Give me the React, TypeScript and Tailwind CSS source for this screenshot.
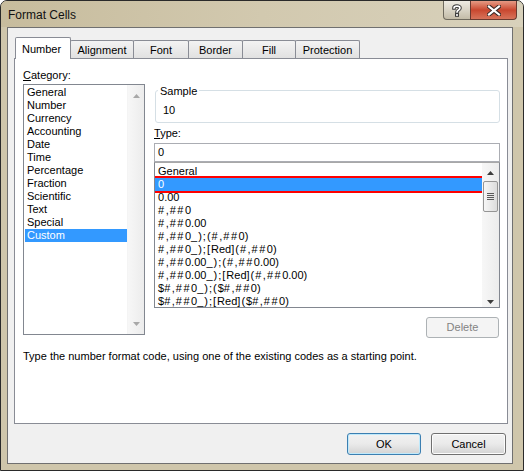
import React from "react";

const categories = [
  "General",
  "Number",
  "Currency",
  "Accounting",
  "Date",
  "Time",
  "Percentage",
  "Fraction",
  "Scientific",
  "Text",
  "Special",
  "Custom",
];

const types = [
  "General",
  "0",
  "0.00",
  "#,##0",
  "#,##0.00",
  "#,##0_);(#,##0)",
  "#,##0_);[Red](#,##0)",
  "#,##0.00_);(#,##0.00)",
  "#,##0.00_);[Red](#,##0.00)",
  "$#,##0_);($#,##0)",
  "$#,##0_);[Red]($#,##0)",
];

function Code({ text }: { text: string }) {
  if (text === "General") return <>{text}</>;
  return (
    <>
      {text.split("").map((ch, i) => {
        if (ch === "#") {
          return (
            <span key={i} className="tracking-[1.5px]">
              {ch}
            </span>
          );
        }
        if (",()[];_".includes(ch)) {
          return (
            <span key={i} className="tracking-[1px]">
              {ch}
            </span>
          );
        }
        return <span key={i}>{ch}</span>;
      })}
    </>
  );
}

function Arrow({ up, color }: { up: boolean; color: string }) {
  return (
    <svg width="7" height="4" viewBox="0 0 7 4">
      {up ? (
        <polygon points="0,4 3.5,0 7,4" fill={color} />
      ) : (
        <polygon points="0,0 3.5,4 7,0" fill={color} />
      )}
    </svg>
  );
}

function Tab({ label, w, active }: { label: string; w: string; active?: boolean }) {
  if (active) {
    return (
      <div
        className={`${w} h-[22px] -mb-px relative z-10 bg-white border border-b-0 border-[#898c95] rounded-t-[2px] flex justify-center pt-[5px] pr-[3px]`}
      >
        {label}
      </div>
    );
  }
  return (
    <div
      className={`${w} h-[18px] -ml-px border border-b-0 border-[#898c95] rounded-t-[2px] bg-gradient-to-b from-[#f3f3f3] to-[#e1e1e1] flex justify-center pt-[3px]`}
    >
      {label}
    </div>
  );
}

export default function App() {
  return (
    <div className="w-[524px] h-[471px] bg-[#cfc6ab] border border-[#2a2a2a] rounded-t-[7px] flex flex-col font-['Liberation_Sans',Arial,sans-serif] text-[11px] leading-[13px] text-black overflow-hidden select-none">
      {/* Title bar */}
      <div className="h-[26px] flex items-start bg-gradient-to-r from-[#c7bc9d] via-[#d2c9af] to-[#d8d1bb]">
        <div className="ml-[7px] mt-[7px] text-[12px] leading-[14px] text-[#111]">Format Cells</div>
        <div className="ml-auto mr-[6px] flex h-[19px]">
          <div className="w-[28px] h-[19px] border border-t-0 border-[#6e6a5e] rounded-bl-[4px] bg-gradient-to-b from-[#eeebe3] via-[#d9d4c6] to-[#c3bca8] flex items-center justify-center">
            <svg width="10" height="13" viewBox="0 0 10 13">
              <path d="M2 4 C2 1.5 8 1.5 8 4 C8 6 5 6 5 8" fill="none" stroke="#3a3a3a" strokeWidth="3.6" strokeLinecap="square" />
              <rect x="3" y="9.2" width="4" height="3.6" fill="#3a3a3a" />
              <path d="M2 4 C2 1.5 8 1.5 8 4 C8 6 5 6 5 8" fill="none" stroke="#ffffff" strokeWidth="1.6" strokeLinecap="square" />
              <rect x="4" y="10.2" width="2" height="1.6" fill="#ffffff" />
            </svg>
          </div>
          <div className="w-[47px] h-[19px] -ml-px border border-t-0 border-[#6b3a30] rounded-br-[4px] bg-gradient-to-b from-[#e59a84] via-[#c9472f] to-[#d7735a] flex items-center justify-center">
            <svg width="14" height="11" viewBox="0 0 14 11">
              <path d="M2 1.5 L12 9.5 M12 1.5 L2 9.5" stroke="#3a2a26" strokeWidth="4.2" strokeLinecap="square" />
              <path d="M2 1.5 L12 9.5 M12 1.5 L2 9.5" stroke="#ffffff" strokeWidth="2.2" strokeLinecap="square" />
            </svg>
          </div>
        </div>
      </div>

      {/* Client area */}
      <div className="ml-[6px] mr-[10px] h-[437px] border border-[#707070] bg-[#f0f0f0] flex flex-col pl-[6px] pr-[4px] pt-[9px]">
        {/* Tabs */}
        <div className="h-[21px] flex items-end pl-px">
          <Tab label="Number" w="w-[56px]" active />
          <Tab label="Alignment" w="w-[64px]" />
          <Tab label="Font" w="w-[56px]" />
          <Tab label="Border" w="w-[55px]" />
          <Tab label="Fill" w="w-[54px]" />
          <Tab label="Protection" w="w-[65px]" />
        </div>

        {/* Panel */}
        <div className="h-[366px] bg-white border border-[#898c95] pl-[8px] pr-[7px] pt-[10px] flex flex-col">
          <div className="flex gap-[9px]">
            {/* Category column */}
            <div className="w-[122px] flex flex-col">
              <div className="h-[13px]">
                <span className="underline underline-offset-1">C</span>ategory:
              </div>
              <div className="mt-[2px] h-[251px] border border-[#828790] flex">
                <div className="flex-1 pt-px pl-px">
                  {categories.map((c) => (
                    <div
                      key={c}
                      className={`h-[13px] pl-[2px] ${c === "Custom" ? "bg-[#3399ff] text-white" : ""}`}
                    >
                      {c}
                    </div>
                  ))}
                </div>
                <div className="w-[17px] bg-gradient-to-r from-[#f7f7f7] to-[#ececec] border-l border-[#f4f4f4] flex flex-col items-center justify-between pt-[9px] pb-[8px]">
                  <Arrow up color="#a8a8a8" />
                  <Arrow up={false} color="#a8a8a8" />
                </div>
              </div>
            </div>

            {/* Right column */}
            <div className="flex-1 flex flex-col mt-[15px]">
              <div className="mt-[6px] ml-px h-[33px] border border-[#d5dfe5] rounded-[3px] relative pl-[7px] pt-[13px]">
                <span className="absolute left-[2px] -top-[6px] bg-white px-[2px]">Sample</span>
                <div>10</div>
              </div>
              <div className="mt-[4px] h-[13px]">
                <span className="underline underline-offset-1">T</span>ype:
              </div>
              <div className="mt-[3px] h-[19px] border border-[#abadb3] pl-[3px] pt-[2px]">0</div>
              <div className="h-[146px] border border-[#828790] border-t-[#a8a8a8] flex overflow-hidden">
                <div className="flex-1 pt-[2px] overflow-hidden">
                  {types.map((t) => (
                    <div
                      key={t}
                      className={`h-[13px] pl-[3px] whitespace-nowrap ${
                        t === "0" ? "bg-[#3399ff] text-white outline-2 outline-[#ff0000] relative z-10" : ""
                      }`}
                    >
                      <Code text={t} />
                    </div>
                  ))}
                </div>
                <div className="w-[17px] bg-gradient-to-r from-[#f7f7f7] to-[#ececec] flex flex-col items-center pt-[8px] pb-[3px]">
                  <Arrow up color="#3d3d3d" />
                  <div className="mt-[6px] w-[15px] h-[31px] border border-[#959595] rounded-[2px] bg-gradient-to-r from-[#f6f6f6] to-[#dcdcdc] flex flex-col items-center justify-center gap-[1px]">
                    <div className="w-[7px] h-px bg-[#5a5a5a]" />
                    <div className="w-[7px] h-px bg-[#5a5a5a]" />
                    <div className="w-[7px] h-px bg-[#5a5a5a]" />
                    <div className="w-[7px] h-px bg-[#5a5a5a]" />
                  </div>
                  <div className="mt-auto">
                    <Arrow up={false} color="#3d3d3d" />
                  </div>
                </div>
              </div>
              <div className="mt-[9px] self-end mr-px w-[73px] h-[21px] border border-[#adb2b5] rounded-[3px] bg-[#f4f4f4] text-[#838383] flex items-center justify-center">
                Delete
              </div>
            </div>
          </div>
          <div className="mt-[12px]">
            Type the number format code, using one of the existing codes as a starting point.
          </div>
        </div>

        {/* Buttons */}
        <div className="mt-[9px] flex justify-end gap-[10px] pr-[2px]">
          <div className="w-[74px] h-[22px] border border-[#3c7fb1] rounded-[3px] bg-gradient-to-b from-[#f2f2f2] via-[#eaeaea] to-[#d3d3d3] shadow-[inset_0_0_0_1px_#bfe9fb] flex items-center justify-center">
            OK
          </div>
          <div className="w-[75px] h-[22px] border border-[#707070] rounded-[3px] bg-gradient-to-b from-[#f2f2f2] via-[#eaeaea] to-[#d3d3d3] shadow-[inset_0_0_0_1px_#fcfcfc] flex items-center justify-center">
            Cancel
          </div>
        </div>
      </div>
    </div>
  );
}
